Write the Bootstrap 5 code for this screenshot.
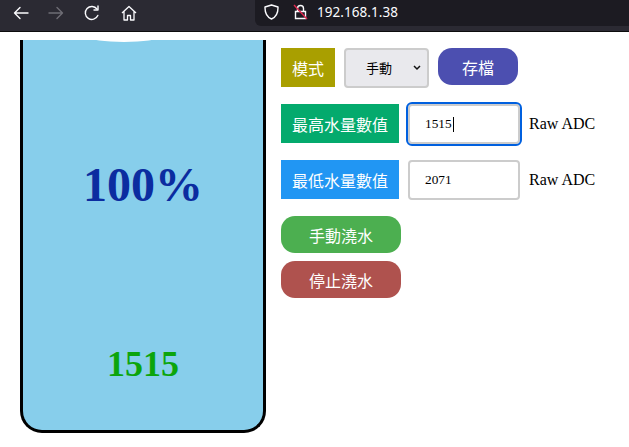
<!DOCTYPE html>
<html lang="zh-Hant">

<head>
  <meta charset="UTF-8">
  <meta name="viewport" content="width=device-width, initial-scale=1.0">
  <title>水位控制</title>
  <link href="https://cdn.jsdelivr.net/npm/bootstrap@5.3.0/dist/css/bootstrap.min.css" rel="stylesheet">
  <style>
    html, body { height: 100%; overflow: hidden; }
    body { background: #fff; color: #000; font-family: "Liberation Serif", "Noto Sans CJK TC", serif; font-size: 16px; }
    .browser-bar { height: 32px; background: #2b2a33; border-bottom: 1px solid #0c0c0d; }
    .nav-icons { width: 255px; height: 25px; padding-left: 13px; gap: 19px; }
    .nav-icons svg { flex: none; }
    .addr-box { height: 26px; padding: 0 0 2px 9px; background: #1c1b22; border-bottom-left-radius: 6px; color: #fbfbfe; font-family: "Noto Sans", sans-serif; font-size: 13.5px; }
    .addr-text { margin-left: 9px; letter-spacing: .05px; }
    .page-area { padding: 8px 0 0 20px; gap: 15px; }
    .tank { width: 246px; height: 393px; position: relative; overflow: hidden; background: #87ceeb; border: 3px solid #000; border-top: 0; border-radius: 0 0 22px 22px; font-weight: 700; text-align: center; }
    .tank-wave { position: absolute; top: -8px; left: 66px; width: 70px; height: 10px; background: #fff; border-radius: 50%; filter: blur(.5px); }
    .tank-percent { padding-top: 117px; font-size: 48px; line-height: 56px; color: #0b2ca0; }
    .tank-raw { margin-top: 130px; font-size: 36px; line-height: 42px; color: #0ca50c; }
    .controls { padding-top: 8px; }
    .ctl-row { display: flex; align-items: flex-start; }
    .ctl-label { height: 39px; color: #fff; font-family: "Noto Sans CJK TC", sans-serif; font-size: 16px; display: flex; align-items: center; justify-content: center; }
    .label-mode { width: 54px; background: #a99f00; }
    .label-high { width: 118px; background: #04aa6d; }
    .label-low { width: 118px; background: #2196f3; }
    .mode-select.form-select { width: 85px; height: 40px; margin-left: 9px; padding: 0 0 0 20px; background-color: #e9e9ed; background-image: url("data:image/svg+xml,%3csvg xmlns='http://www.w3.org/2000/svg' viewBox='0 0 8 6'%3e%3cpath fill='none' stroke='%23111' stroke-width='1.5' d='M1 1l3 3 3-3'/%3e%3c/svg%3e"); background-position: right 6px center; background-size: 8px 6px; border: 2px solid #ccc; border-radius: 4px; color: #000; font-family: "Noto Sans CJK TC", sans-serif; font-size: 13px; }
    .btn.btn-save, .btn.btn-water, .btn.btn-halt { color: #fff; border: 0; border-radius: 14px; padding: 0; font-family: "Noto Sans CJK TC", sans-serif; font-size: 16px; height: 37px; }
    .btn.btn-save { width: 80px; margin-left: 9px; background: #4c4fb0; }
    .btn.btn-water { width: 120px; background: #4caf50; }
    .btn.btn-halt { width: 120px; background: #af524e; }
    .field-wrap { position: relative; width: 112px; height: 40px; margin-left: 9px; }
    .field-wrap .form-control { width: 112px; height: 40px; padding: 0 0 0 15px; border: 2px solid #ccc; border-radius: 4px; color: #000; font-family: "Liberation Serif", serif; font-size: 13.33px; box-shadow: none; }
    .field-active .form-control { outline: 2px solid #0060df; outline-offset: 0; caret-color: transparent; }
    .text-caret { position: absolute; left: 45px; top: 13px; width: 1px; height: 15px; background: #000; }
    .unit-text { margin-left: 9px; line-height: 39px; }
    .row-mode { height: 56px; }
    .row-high { height: 56px; }
    .row-low { height: 56px; }
    .btn-stack { gap: 8px; }
  </style>
</head>

<body>

  <div class="browser-bar d-flex">
    <div class="nav-icons d-flex align-items-center">
      <svg width="16" height="16" viewBox="0 0 16 16" fill="none" stroke="#fbfbfe" stroke-width="1.4" stroke-linecap="round" stroke-linejoin="round"><path d="M15 8H1.500M7 2.500 1.500 8 7 13.500"/></svg>
      <svg width="16" height="16" viewBox="0 0 16 16" fill="none" stroke="#6e6d75" stroke-width="1.4" stroke-linecap="round" stroke-linejoin="round"><path d="M1 8h13.500M9 2.500 14.500 8 9 13.500"/></svg>
      <svg width="16" height="16" viewBox="0 0 16 16" fill="none" stroke="#fbfbfe" stroke-width="1.4" stroke-linecap="round" stroke-linejoin="round" style="margin-left:1px"><path d="M13.800 10.500A6.500 6.500 0 1 1 13 4"/><path d="M14 1v4h-4"/></svg>
      <svg width="16" height="16" viewBox="0 0 16 16" fill="none" stroke="#fbfbfe" stroke-width="1.300" stroke-linejoin="round" style="margin-left:2px"><path d="M1 8 8 1.500 15 8M3 6.500V15h3.500v-4.500h3V15H13V6.500"/></svg>
    </div>
    <div class="addr-box flex-grow-1 d-flex align-items-center">
      <svg width="15" height="16" viewBox="0 0 15 16" fill="none" stroke="#fbfbfe" stroke-width="1.400" stroke-linejoin="round"><path d="M7.500 1 14 3c.2 6-1.500 10-6.500 12C2.500 13 .8 9 1 3Z"/></svg>
      <svg width="15" height="16" viewBox="0 0 15 16" fill="none" stroke-width="1.400" style="margin-left:14px"><path d="M4.500 7V4.500a3 3 0 0 1 6 0V7M2.500 7.500h10v7h-10Z" stroke="#fbfbfe"/><path d="M1 1l13 14" stroke="#e22850"/></svg>
      <span class="addr-text">192.168.1.38</span>
    </div>
  </div>

  <div class="page-area d-flex">
    <div class="tank">
      <div class="tank-wave"></div>
      <div class="tank-percent">100%</div>
      <div class="tank-raw">1515</div>
    </div>

    <div class="controls">
      <div class="ctl-row row-mode">
        <div class="ctl-label label-mode">模式</div>
        <select class="form-select mode-select">
          <option>手動</option>
          <option>自動</option>
        </select>
        <button type="button" class="btn btn-save">存檔</button>
      </div>
      <div class="ctl-row row-high">
        <div class="ctl-label label-high">最高水量數值</div>
        <div class="field-wrap field-active">
          <input type="text" class="form-control" value="1515">
          <span class="text-caret"></span>
        </div>
        <span class="unit-text">Raw ADC</span>
      </div>
      <div class="ctl-row row-low">
        <div class="ctl-label label-low">最低水量數值</div>
        <div class="field-wrap">
          <input type="text" class="form-control" value="2071">
        </div>
        <span class="unit-text">Raw ADC</span>
      </div>
      <div class="btn-stack d-flex flex-column align-items-start">
        <button type="button" class="btn btn-water">手動澆水</button>
        <button type="button" class="btn btn-halt">停止澆水</button>
      </div>
    </div>
  </div>

  <script src="https://cdn.jsdelivr.net/npm/bootstrap@5.3.0/dist/js/bootstrap.bundle.min.js"></script>
</body>

</html>
